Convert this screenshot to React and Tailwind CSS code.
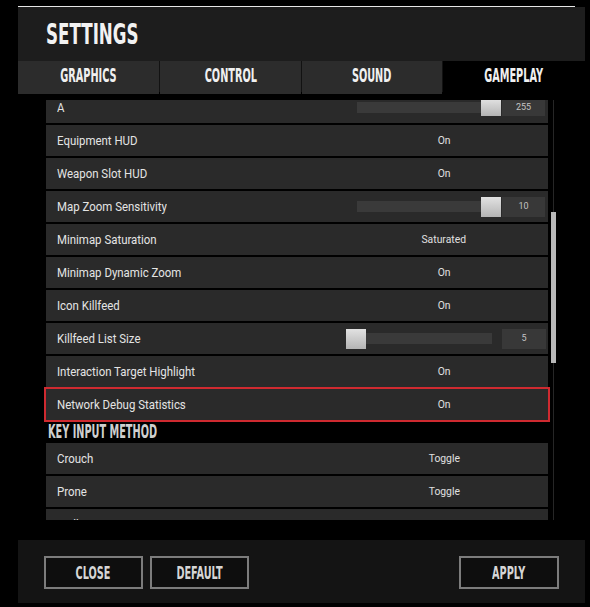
import React from "react";

const head = { fontFamily: '"DejaVu Sans Condensed", "DejaVu Sans", sans-serif' };
const body = { fontFamily: 'Roboto, "Noto Sans", sans-serif' };

const tabs = ["GRAPHICS", "CONTROL", "SOUND", "GAMEPLAY"];

const rows = [
  { label: "A", slider: { pad: "pl-[17px]", track: "w-[144px]", pos: "max", value: "255", thumb: "h-[17px]" } },
  { label: "Equipment HUD", value: "On" },
  { label: "Weapon Slot HUD", value: "On" },
  { label: "Map Zoom Sensitivity", slider: { pad: "pl-[17px]", track: "w-[144px]", pos: "max", value: "10", thumb: "h-[20px]" } },
  { label: "Minimap Saturation", value: "Saturated" },
  { label: "Minimap Dynamic Zoom", value: "On" },
  { label: "Icon Killfeed", value: "On" },
  { label: "Killfeed List Size", slider: { pad: "pl-[6px]", track: "w-[146px]", pos: "min", value: "5", thumb: "h-[20px]" } },
  { label: "Interaction Target Highlight", value: "On" },
  { label: "Network Debug Statistics", value: "On", selected: true },
];

const keyRows = [
  { label: "Crouch", value: "Toggle" },
  { label: "Prone", value: "Toggle" },
  { label: "Walk", value: "Toggle" },
];

const Slider = ({ s }) => (
  <div className={`flex items-center h-full ${s.pad}`}>
    <div className={`relative flex items-center h-full ${s.track}`}>
      <div className="w-full h-[11px] bg-[#3a3a3a]" />
      <div
        className={`absolute ${s.pos === "max" ? "right-0" : "left-0"} w-[20px] ${s.thumb} bg-gradient-to-b from-[#e2e2e2] to-[#b4b4b4]`}
      />
    </div>
    <div
      className={`${s.pos === "min" ? "ml-[10px] w-[44px]" : "ml-px w-[43px]"} ${s.thumb} bg-[#383838] flex items-center justify-center text-[9px] text-[#c4c4c4]`}
    >
      {s.value}
    </div>
  </div>
);

const Row = ({ r }) => (
  <div
    className={`flex items-center h-[31px] shrink-0 bg-[#2a2a2a] ${r.selected ? "ring-2 ring-[#cf2a30]" : ""}`}
  >
    <div className="flex-1 pl-[11px] text-[13px] text-[#e4e4e4]">
      <span className="inline-block origin-left scale-x-[0.88] whitespace-nowrap">{r.label}</span>
    </div>
    <div className="w-[208px] h-full flex items-center justify-center">
      {r.slider ? (
        <div className="w-full h-full">
          <Slider s={r.slider} />
        </div>
      ) : (
        <span className="text-[11.5px] text-[#e0e0e0] inline-block scale-x-[0.9]">{r.value}</span>
      )}
    </div>
  </div>
);

const Button = ({ children, w }) => (
  <button
    className={`${w} h-[33px] border-2 border-[#7c7c7c] bg-[#0e0e0e] flex items-center justify-center text-[18px] font-bold text-[#d6d6d6]`}
    style={head}
  >
    <span className="inline-block scale-x-[0.6]">{children}</span>
  </button>
);

export default function App() {
  return (
    <div className="w-[590px] h-[607px] bg-black overflow-hidden flex flex-col pl-[18px] pr-[5px]" style={body}>
      <div className="mt-[6px] h-px w-[557px] bg-[#e6e6e6] shrink-0" />
      <div className="h-[54px] shrink-0 bg-[#1d1d1d] flex items-start pl-[28px] pt-[10px]">
        <span className="inline-block origin-left scale-x-[0.64] text-[29px] font-bold text-[#f2f2f2] leading-[34px]" style={head}>
          SETTINGS
        </span>
      </div>
      <div className="h-[31px] shrink-0 grid grid-cols-[141px_141px_140px_1fr] gap-[1px] bg-[#121212]">
        {tabs.map((t, i) => (
          <div
            key={t}
            className={`flex items-center justify-center pb-[4px] ${i === 3 ? "bg-black" : "bg-[#2c2c2c]"}`}
          >
            <span className="inline-block scale-x-[0.57] text-[19px] font-bold text-[#f0f0f0]" style={head}>
              {t}
            </span>
          </div>
        ))}
      </div>

      <div className="mt-[8px] h-[420px] shrink-0 flex overflow-hidden">
        <div className="ml-[26px] w-[506px] px-[2px] overflow-hidden">
          <div className="-mt-[8px] flex flex-col gap-[2px]">
            {rows.map((r) => (
              <Row key={r.label} r={r} />
            ))}
            <div className="h-[19px] shrink-0 flex items-center pl-[2px]">
              <span className="inline-block origin-left scale-x-[0.57] text-[19px] font-bold text-[#cfcfcf] whitespace-nowrap" style={head}>
                KEY INPUT METHOD
              </span>
            </div>
            {keyRows.map((r) => (
              <Row key={r.label} r={r} />
            ))}
          </div>
        </div>
        <div className="relative ml-px w-[5px] h-full flex justify-center">
          <div className="w-px h-full bg-[#262626]" />
          <div className="absolute top-[112px] left-0 w-[5px] h-[151px] bg-[#b8b8b8]" />
        </div>
      </div>

      <div className="mt-[20px] h-[63px] shrink-0 bg-[#141414] flex items-start pt-[16px] pl-[26px] pr-[26px]">
        <Button w="w-[99px]">CLOSE</Button>
        <div className="ml-[7px]">
          <Button w="w-[99px]">DEFAULT</Button>
        </div>
        <div className="ml-auto">
          <Button w="w-[100px]">APPLY</Button>
        </div>
      </div>
    </div>
  );
}
